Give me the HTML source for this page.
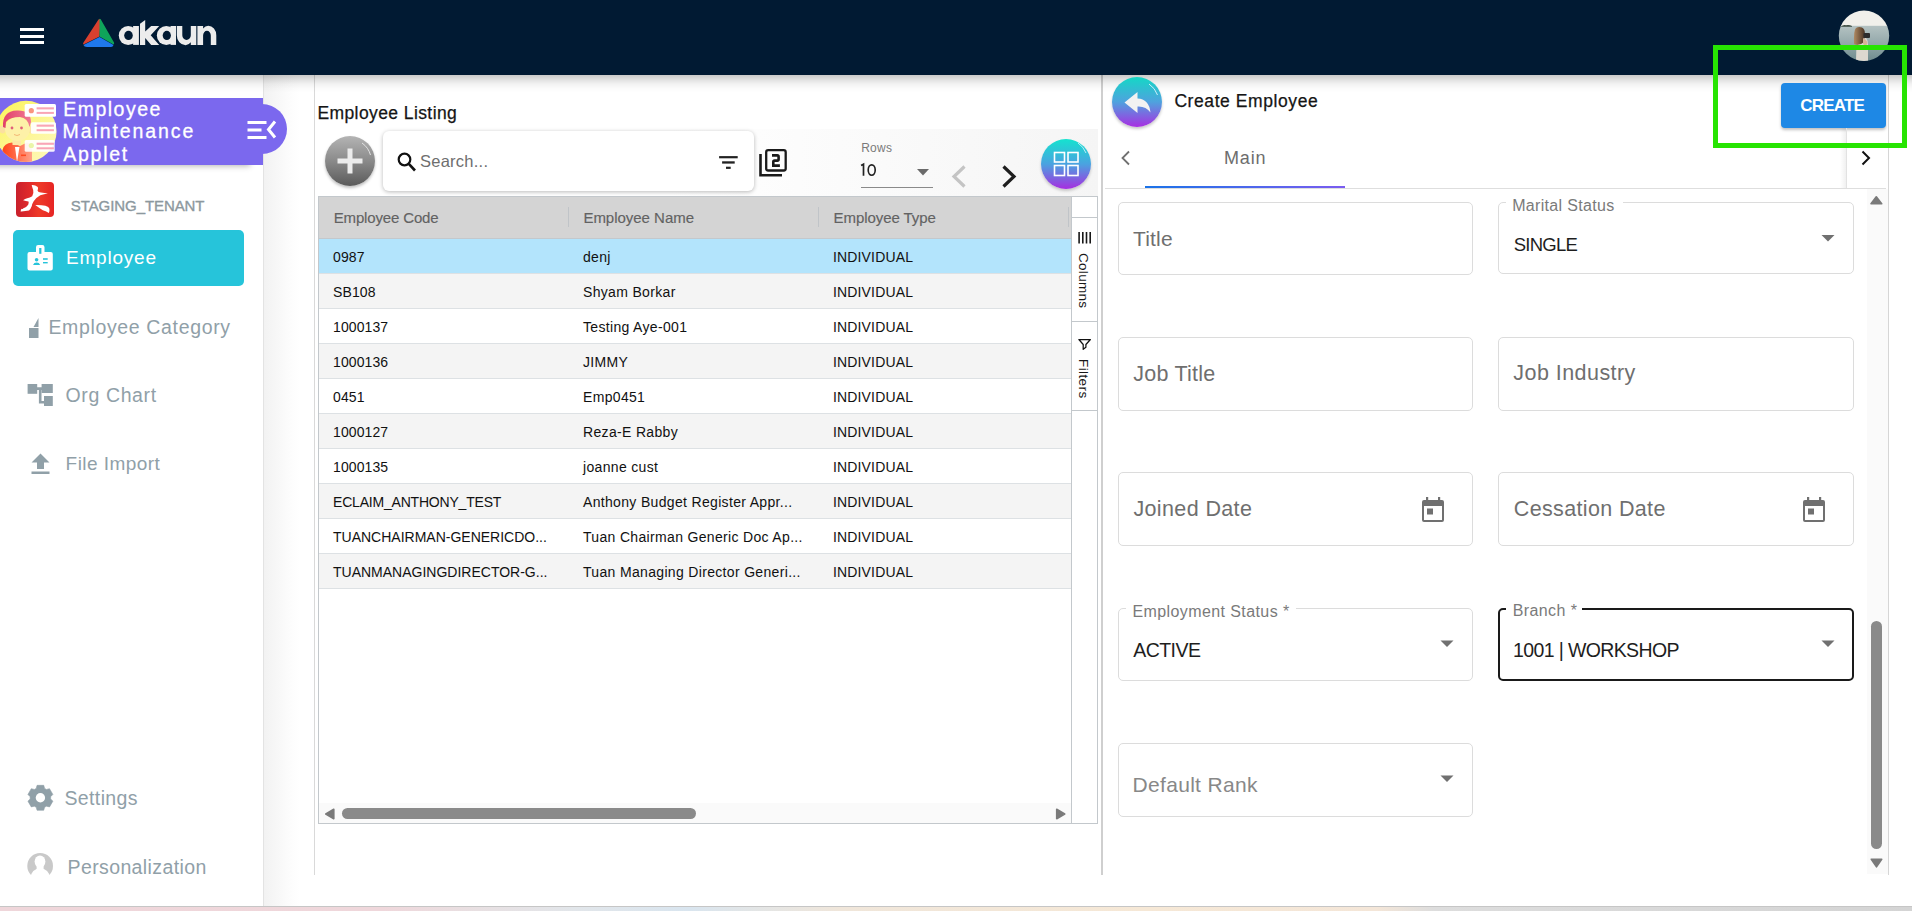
<!DOCTYPE html><html><head><meta charset="utf-8"><title>akaun</title><style>
*{margin:0;padding:0;box-sizing:border-box}
html,body{width:1912px;height:911px;overflow:hidden;background:#fff;font-family:"Liberation Sans",sans-serif}
.a{position:absolute}
.t{position:absolute;white-space:nowrap;font-family:"Liberation Sans",sans-serif}
svg{position:absolute;overflow:visible}
.trow{font-size:14px;line-height:15px;color:#111;letter-spacing:0.1px}.c2{letter-spacing:0.33px}.c3{letter-spacing:0.15px}.cup{letter-spacing:0px}.cecl{letter-spacing:-0.2px}</style></head><body>
<div class="a" style="left:0;top:906px;width:1912px;height:5px;background:linear-gradient(90deg,#efd6da 0%,#efd7db 20%,#e8e0e2 25%,#e2e6ea 30%,#d9e5ef 36%,#f0e6da 44%,#f6e8d6 60%,#f4e6d8 72%,#dddddd 75%,#d4d4d4 100%);border-top:1px solid #c6c6c6"></div>
<div class="a" style="left:0;top:75px;width:264px;height:831px;background:#fff;border-right:1px solid #e3e3e3"></div>
<div class="a" style="left:264px;top:75px;width:50px;height:831px;background:linear-gradient(90deg,#f2f2f2 0%,#f7f7f7 25%,#fcfcfc 50%,#fff 72%)"></div>
<div class="a" style="left:314px;top:75px;width:1px;height:800px;background:#d9d9d9"></div>
<div class="a" style="left:1101px;top:75px;width:2px;height:800px;background:#cfcfcf"></div>
<div class="a" style="left:1888px;top:75px;width:1px;height:800px;background:#d6d6d6"></div>
<div class="a" style="left:0;top:75px;width:1912px;height:18px;background:linear-gradient(180deg,rgba(0,0,0,.21) 0%,rgba(0,0,0,.12) 25%,rgba(0,0,0,.05) 50%,rgba(0,0,0,.015) 75%,rgba(0,0,0,0) 100%)"></div>
<div class="a" style="left:0;top:0;width:1912px;height:75px;background:#011a33"></div>
<div class="a" style="left:20px;top:28px;width:24px;height:3px;background:#fff"></div>
<div class="a" style="left:20px;top:34.5px;width:24px;height:3px;background:#fff"></div>
<div class="a" style="left:20px;top:41px;width:24px;height:3px;background:#fff"></div>
<svg style="left:0;top:0" width="1912" height="75">
<path d="M98.5 19.5 Q99.5 18.5 100.5 19.5 L99.5 36.5 L83.5 44.5 Q82.5 44 83.5 42.5 Z" fill="#d9402f"/>
<path d="M99.5 18.8 Q100.5 18.8 101 19.8 L114 42.5 Q114.5 44 113.5 44.5 L99.5 36.5 Z" fill="#0fa35a"/>
<path d="M83.5 45 L99.5 37 L113.5 45 Q113 47 111 47 L87 47 Q84 47 83.5 45 Z" fill="#1f78ec"/>
</svg>
<svg style="left:0;top:0" width="300" height="75">
<g fill="#ececec">
<circle cx="128.2" cy="35.45" r="9.45"/><rect x="133.1" y="26" width="5.8" height="18.9"/>
<path d="M140 23.8 L145.2 19.9 V31.5 L151.2 26 H159.2 L150.7 35.3 L159.2 44.9 H151.2 L145.2 38 V44.9 H140 Z"/>
<circle cx="166.3" cy="35.45" r="9.45"/><rect x="170.5" y="26" width="5.5" height="18.9"/>
<path d="M176.8 26 H182.3 V35.2 A4.25 4.8 0 0 0 190.8 35.2 V26 H196.3 V44.9 H190.8 V42.3 Q188.6 45.2 185.6 45.2 A8.8 9.9 0 0 1 176.8 35.2 Z"/>
<path d="M197.4 44.9 V26 H203.1 V28.6 Q205.2 25.7 208.2 25.7 A8.1 9.6 0 0 1 216.3 35.4 V44.9 H210.8 V35.4 A3.85 4.6 0 0 0 203.1 35.4 V44.9 Z"/>
</g>
<g fill="#011a33">
<ellipse cx="128.5" cy="35.45" rx="4.3" ry="4.6"/>
<ellipse cx="166.8" cy="35.45" rx="4.1" ry="4.6"/>
</g>
</svg>
<svg style="left:0;top:0" width="1912" height="75">
<defs><clipPath id="avp"><circle cx="1864" cy="35.8" r="25.2"/></clipPath>
<linearGradient id="sea" x1="0" y1="0" x2="0" y2="1"><stop offset="0" stop-color="#b4c2c2"/><stop offset=".5" stop-color="#93a8aa"/><stop offset="1" stop-color="#6d8a8c"/></linearGradient>
<linearGradient id="hairg" x1="0" y1="0" x2="1" y2="0"><stop offset="0" stop-color="#b08a62"/><stop offset="1" stop-color="#4a3424"/></linearGradient></defs>
<g clip-path="url(#avp)">
<rect x="1838" y="10" width="52" height="16" fill="#f1f0eb"/>
<rect x="1838" y="25.8" width="52" height="36" fill="url(#sea)"/>
<path d="M1841 26.6 Q1843 24.6 1846 25.2 Q1849 24.4 1852 26 L1852 26.8 L1841 26.8 Z" fill="#3a4a40"/>
<path d="M1856 62 L1856.5 42 Q1857 38 1860 38 L1866 38 Q1868 40 1868 45 L1868 62 Z" fill="#ddd8cf"/>
<path d="M1854 44 Q1853.5 30 1856 28 Q1858.5 26.5 1862 27.5 Q1865 29 1864.8 33 L1864 42 Q1861 45 1857 45 Z" fill="url(#hairg)"/>
<rect x="1863.5" y="33" width="6.5" height="5" rx="1" fill="#2c2c2c"/>
<path d="M1863 38 Q1866 39 1867.5 43 L1866 46 L1863 44 Z" fill="#d8b598"/>
</g>
</svg>
<div class="a" style="left:0;top:98px;width:263px;height:67px;background:#7b68ee;box-shadow:-10px 4px 6px -3px rgba(0,0,0,.3)"></div>
<div class="a" style="left:237px;top:104px;width:50px;height:50px;border-radius:50%;background:#7b68ee"></div>
<div class="a" style="left:200px;top:98px;width:63px;height:67px;background:#7b68ee"></div>
<svg style="left:0;top:0" width="300" height="200">
<defs><clipPath id="avc"><circle cx="26" cy="131.4" r="30.6"/></clipPath>
<linearGradient id="avg" x1="0" y1="0" x2="1" y2="1"><stop offset="0" stop-color="#fbf34a"/><stop offset=".6" stop-color="#fdf7a0"/><stop offset="1" stop-color="#fff9c8"/></linearGradient>
<linearGradient id="shirt" x1="0" y1="0" x2="1" y2="0"><stop offset="0" stop-color="#ff3d12"/><stop offset="1" stop-color="#ffa088"/></linearGradient>
<linearGradient id="hair" x1="0" y1="0" x2="1" y2="0"><stop offset="0" stop-color="#e2406a"/><stop offset="1" stop-color="#f07a92"/></linearGradient>
</defs>
<g clip-path="url(#avc)">
<rect x="-10" y="95" width="80" height="70" fill="url(#avg)"/>
<path d="M1 165 L2.5 150 Q4 143 12 142.5 L20 146 L27 142.5 Q32 144 32 150 L32 165 Z" fill="url(#shirt)"/>
<path d="M15 147 L17 162 L19.5 147 Z" fill="#fff"/>
<rect x="12.5" y="136" width="8.5" height="9" fill="#fde7a8"/>
<ellipse cx="2.5" cy="129.5" rx="3" ry="4" fill="#fbe0a0"/>
<ellipse cx="31.5" cy="129.5" rx="3" ry="4" fill="#fbe0a0"/>
<ellipse cx="17.5" cy="129" rx="12.5" ry="12" fill="#fdf1a8"/>
<path d="M3 127 Q2 111 17 110.5 Q31 110 31 122 L29.5 127 Q28 118 20 117 Q10 117 6 122 L5.5 128 Z" fill="url(#hair)"/>
<circle cx="12" cy="128" r="1.4" fill="#e0607a"/><circle cx="21.5" cy="128" r="1.4" fill="#e0607a"/>
<path d="M14 134.5 Q17 136.5 20 134.5" stroke="#f0b070" stroke-width=".9" fill="none"/>
<rect x="21" y="154.5" width="5" height="1.6" fill="#ff4a20"/>
</g>
<rect x="24.7" y="104" width="31.3" height="12.8" rx="1.5" fill="#fff"/>
<circle cx="31.3" cy="110.7" r="2.6" fill="#f9957e"/><rect x="36.6" y="107.3" width="17.3" height="2.1" fill="#f9a5b5"/><rect x="36.6" y="111.9" width="17.3" height="2" fill="#f9a5b5"/>
<rect x="30.9" y="122.2" width="25" height="11.5" rx="1.5" fill="#fff" opacity=".92"/>
<rect x="36.6" y="124.6" width="17.3" height="2.1" fill="#f9a5b5"/><rect x="36.6" y="129.2" width="17.3" height="2" fill="#f9a5b5"/>
<rect x="24.7" y="139.9" width="30" height="11.9" rx="1.5" fill="#fff" opacity=".9"/>
<circle cx="31.3" cy="145.5" r="2.6" fill="#eaf5a8"/><rect x="36.6" y="142.7" width="17.3" height="2.1" fill="#f9a5b5"/><rect x="36.6" y="147.3" width="17.3" height="2" fill="#f9a5b5"/>
<!-- menu collapse icon -->
<rect x="247.5" y="121" width="19" height="3" fill="#fff"/>
<rect x="247.5" y="128.5" width="14" height="3" fill="#fff"/>
<rect x="247.5" y="136" width="19" height="3" fill="#fff"/>
<path d="M275 121.5 L268.5 129.5 L275 137.5" stroke="#fff" stroke-width="3" fill="none"/>
</svg>
<div class="t " style="left:63.3px;top:100.2px;font-size:19.5px;line-height:19.5px;color:#fff;letter-spacing:1.47px;-webkit-text-stroke:0.3px #fff;">Employee</div>
<div class="t " style="left:62.6px;top:122.2px;font-size:19.5px;line-height:19.5px;color:#fff;letter-spacing:1.91px;-webkit-text-stroke:0.3px #fff;">Maintenance</div>
<div class="t " style="left:63.3px;top:144.9px;font-size:19.5px;line-height:19.5px;color:#fff;letter-spacing:1.72px;-webkit-text-stroke:0.3px #fff;">Applet</div>
<div class="a" style="left:16px;top:182px;width:38px;height:35px;border-radius:4px;background:linear-gradient(90deg,#c8202c,#e02a2a 35%,#ee3a28 60%,#e62424)"></div>
<svg style="left:0;top:0" width="100" height="240">
<path d="M31.7 185.1 Q35 184.8 37.8 187.1 Q38.5 189 37.5 190.6 Q38 192.5 41 192.5 L47.9 193.4 Q44 194.2 40.3 195.2 Q36 197.5 33.7 201.3 Q32 204 31.7 206.3 Q30.5 209.5 29 210.6 Q25 211.5 20.6 211.4 Q20.8 209.5 21.6 208.8 Q22.5 209.5 23 208.6 Q26 208 28.2 204.8 Q29 202.5 28.5 201.5 Q26 201.3 23.1 200.2 Q25 198.8 27.2 198.2 Q30 197.5 32.2 196.2 Q34 194 33.2 190.1 Q32 187 31.7 185.1 Z" fill="#fff"/>
<path d="M35.3 205 Q41 204.8 45.4 205.8 Q49 207 49.4 208.8 Q49.8 211 48.9 212.9 Q45.5 211 42.8 210.3 Q38.5 207.5 35.3 205 Z" fill="#fff"/>
</svg>
<div class="t " style="left:70.8px;top:197.6px;font-size:15.0px;line-height:15.0px;color:#8c989e;letter-spacing:-0.08px;-webkit-text-stroke:0.35px #8c989e;">STAGING_TENANT</div>
<div class="a" style="left:13px;top:230px;width:231px;height:56px;border-radius:5px;background:#26c4da"></div>
<svg style="left:0;top:0" width="100" height="300">
<path d="M29.5 252 Q27.5 252 27.5 254 L27.5 268.4 Q27.5 270.4 29.5 270.4 L50.8 270.4 Q52.8 270.4 52.8 268.4 L52.8 254 Q52.8 252 50.8 252 L44.5 252 L44.5 247.2 Q44.5 245.1 42.4 245.1 L38.1 245.1 Q36 245.1 36 247.2 L36 252 Z" fill="#fff"/>
<rect x="39.2" y="248" width="2.2" height="5.8" fill="#26c4da"/>
<circle cx="36.6" cy="259.8" r="1.8" fill="#26c4da"/>
<path d="M33 264.9 Q34 262.6 36.6 262.6 Q39.2 262.6 40.2 264.9 Z" fill="#26c4da"/>
<rect x="43" y="258.2" width="4.7" height="1.6" fill="#26c4da"/>
<rect x="43" y="262" width="4.7" height="1.4" fill="#26c4da"/>
</svg>
<div class="t " style="left:66.0px;top:247.8px;font-size:19.0px;line-height:19.0px;color:#fff;letter-spacing:0.79px;">Employee</div>
<svg style="left:0;top:0" width="100" height="900">
<rect x="29" y="328" width="9.5" height="10" fill="#90a0a8"/>
<path d="M33.5 327 L38.5 318 L38.5 327 Z" fill="#90a0a8"/>
<!-- org chart -->
<rect x="27.6" y="384" width="9.6" height="9.8" fill="#90a0a8"/>
<rect x="41.6" y="384" width="11.2" height="9" fill="#90a0a8"/>
<rect x="44" y="396" width="8.8" height="10" fill="#90a0a8"/>
<path d="M37 388.6 L42 388.6 M40.2 388 L40.2 402.3 L44.5 402.3" stroke="#90a0a8" stroke-width="2.6" fill="none"/>
<!-- upload -->
<path d="M40.5 453.5 L49.5 462.5 L44 462.5 L44 469 L37 469 L37 462.5 L31.5 462.5 Z" fill="#90a0a8"/>
<rect x="31.5" y="471.5" width="18" height="2.5" fill="#90a0a8"/>
</svg>
<div class="t " style="left:48.4px;top:317.8px;font-size:19.5px;line-height:19.5px;color:#90a0a8;letter-spacing:0.65px;">Employee Category</div>
<div class="t " style="left:65.6px;top:386.0px;font-size:19.5px;line-height:19.5px;color:#90a0a8;letter-spacing:0.61px;">Org Chart</div>
<div class="t " style="left:65.6px;top:453.5px;font-size:19.0px;line-height:19.0px;color:#90a0a8;letter-spacing:0.45px;">File Import</div>
<svg style="left:0;top:0" width="100" height="900">
<path d="M35.25 788.88 L36.21 788.39 L37.06 785.34 L43.74 785.34 L44.59 788.39 L45.55 788.88 L46.45 789.47 L49.52 788.68 L52.86 794.46 L50.64 796.72 L50.70 797.80 L50.64 798.88 L52.86 801.14 L49.52 806.92 L46.45 806.13 L45.55 806.72 L44.59 807.21 L43.74 810.26 L37.06 810.26 L36.21 807.21 L35.25 806.72 L34.35 806.13 L31.28 806.92 L27.94 801.14 L30.16 798.88 L30.10 797.80 L30.16 796.72 L27.94 794.46 L31.28 788.68 L34.35 789.47 Z" fill="#90a0a8" stroke="#90a0a8" stroke-width=".6" stroke-linejoin="round"/>
<circle cx="40.4" cy="797.8" r="4.7" fill="#fff"/>
<!-- person -->
<circle cx="40.15" cy="865.95" r="12.85" fill="#c9c9c9"/>
<ellipse cx="40" cy="861.6" rx="5.4" ry="6.2" fill="#fff"/>
<rect x="36.6" y="862" width="7" height="8" fill="#fff"/>
<circle cx="40.2" cy="877.9" r="9.7" fill="#fff"/>
<rect x="20" y="875.2" width="40" height="6" fill="#fff"/>
</svg>
<div class="t " style="left:64.4px;top:789.2px;font-size:19.5px;line-height:19.5px;color:#90a0a8;letter-spacing:0.39px;">Settings</div>
<div class="t " style="left:67.5px;top:858.1px;font-size:19.5px;line-height:19.5px;color:#90a0a8;letter-spacing:0.39px;">Personalization</div>
<div class="t " style="left:317.4px;top:105.4px;font-size:17.5px;line-height:17.5px;color:#151515;letter-spacing:0.41px;-webkit-text-stroke:0.25px #151515;">Employee Listing</div>
<div class="a" style="left:318px;top:129px;width:780px;height:68px;background:linear-gradient(90deg,#fff 0%,#fff 45%,#f5f5f5 100%)"></div>
<div class="a" style="left:325px;top:136px;width:50px;height:50px;border-radius:50%;background:linear-gradient(180deg,#b4b4b4 0%,#8a8a8a 50%,#5a5a5a 100%);box-shadow:0 2px 3px rgba(0,0,0,.25)"></div>
<svg style="left:0;top:0" width="400" height="200">
<rect x="347.5" y="148.5" width="5" height="25" fill="#ececec"/>
<rect x="337.5" y="158.5" width="25" height="5" fill="#ececec"/>
<path d="M362 143 A22 22 0 0 1 370.5 155" stroke="#e8e8e8" stroke-width="1" fill="none" opacity=".9"/>
</svg>
<div class="a" style="left:383px;top:131px;width:371px;height:60px;border-radius:6px;background:#fff;box-shadow:0 1px 4px rgba(0,0,0,.28)"></div>
<svg style="left:0;top:0" width="800" height="200">
<circle cx="404.5" cy="159.5" r="5.8" stroke="#111" stroke-width="2.2" fill="none"/>
<path d="M408.8 163.8 L415 170.5" stroke="#111" stroke-width="2.6"/>
<!-- filter lines -->
<rect x="719.1" y="156.1" width="18.6" height="2.2" fill="#222"/>
<rect x="722.1" y="161.3" width="12.6" height="2.3" fill="#222"/>
<rect x="726" y="166.7" width="4.7" height="2.2" fill="#222"/>
<!-- filter_2 -->
<path d="M760.5 154.1 L760.5 175.3 L782 175.3" stroke="#1a1a1a" stroke-width="2.6" fill="none"/>
<rect x="766.2" y="150.2" width="19.5" height="20.3" rx="2" stroke="#1a1a1a" stroke-width="2.3" fill="none"/>
<path d="M772 155.4 H777.3 Q778.6 155.4 778.6 156.7 V159.3 Q778.6 160.6 777.3 160.6 H774.6 Q773.3 160.6 773.3 161.9 V165.6 H779.9" stroke="#1a1a1a" stroke-width="2.6" fill="none"/>
</svg>
<div class="t " style="left:420.0px;top:152.7px;font-size:16.5px;line-height:16.5px;color:#6e6e6e;letter-spacing:0.25px;">Search...</div>
<div class="t " style="left:861.2px;top:142.2px;font-size:12.0px;line-height:12.0px;color:#7a7a7a;letter-spacing:0.27px;">Rows</div>
<svg style="left:0;top:0" width="900" height="200"><path d="M861.1 165.6 L863.5 164.2 V175.8" stroke="#222" stroke-width="1.7" fill="none"/><ellipse cx="871.7" cy="170" rx="3.5" ry="5.2" stroke="#222" stroke-width="1.65" fill="none"/></svg>
<div class="a" style="left:861px;top:187px;width:72px;height:1px;background:#8a8a8a"></div>
<svg style="left:0;top:0" width="1100" height="200">
<path d="M917 169 L929 169 L923 175.5 Z" fill="#6a6a6a"/>
<path d="M964.5 166.5 L954 176.5 L964.5 186.5" stroke="#c4c4c4" stroke-width="3.2" fill="none"/>
<path d="M1003.5 166.5 L1014 176.5 L1003.5 186.5" stroke="#1e1e1e" stroke-width="3.2" fill="none"/>
</svg>
<div class="a" style="left:1041px;top:139px;width:50px;height:50px;border-radius:50%;background:linear-gradient(180deg,#14e3cf 0%,#4aa3e0 50%,#a62ee0 100%);box-shadow:0 2px 3px rgba(0,0,0,.2)"></div>
<svg style="left:0;top:0" width="1100" height="200">
<rect x="1054.5" y="152.5" width="10" height="9.5" stroke="#fff" stroke-width="1.6" fill="none"/>
<rect x="1068" y="152.5" width="10" height="9.5" stroke="#fff" stroke-width="1.6" fill="none"/>
<rect x="1054.5" y="165.5" width="10" height="10" stroke="#fff" stroke-width="1.6" fill="none"/>
<rect x="1068" y="165.5" width="10" height="10" stroke="#fff" stroke-width="1.6" fill="none"/>
<path d="M1078 143 A22 22 0 0 1 1086 153" stroke="#e0f6ff" stroke-width="1" fill="none" opacity=".8"/>
</svg>
<div class="a" style="left:318px;top:196px;width:780px;height:628px;border:1px solid #c3c8cc;background:#fff"></div>
<div class="a" style="left:319px;top:197px;width:752px;height:42px;background:#d4d4d4;border-bottom:1px solid #c3c8cc"></div>
<div class="a" style="left:568px;top:207px;width:1px;height:20px;background:#c0c4c8"></div>
<div class="a" style="left:818px;top:207px;width:1px;height:20px;background:#c0c4c8"></div>
<div class="a" style="left:1068px;top:207px;width:1px;height:20px;background:#c0c4c8"></div>
<div class="t " style="left:333.7px;top:209.7px;font-size:15.0px;line-height:15.0px;color:#626262;letter-spacing:-0.15px;-webkit-text-stroke:0.15px #626262;">Employee Code</div>
<div class="t " style="left:583.4px;top:209.7px;font-size:15.0px;line-height:15.0px;color:#626262;letter-spacing:-0.02px;-webkit-text-stroke:0.15px #626262;">Employee Name</div>
<div class="t " style="left:833.6px;top:209.5px;font-size:15.0px;line-height:15.0px;color:#626262;letter-spacing:-0.07px;-webkit-text-stroke:0.15px #626262;">Employee Type</div>
<div class="a" style="left:319px;top:239px;width:752px;height:35px;background:#b3e4fc;border-bottom:1px solid #dde1e4"></div>
<div class="t trow c1" style="left:333px;top:250px">0987</div>
<div class="t trow c2" style="left:583px;top:250px">denj</div>
<div class="t trow c3" style="left:833px;top:250px">INDIVIDUAL</div>
<div class="a" style="left:319px;top:274px;width:752px;height:35px;background:#f4f4f4;border-bottom:1px solid #dde1e4"></div>
<div class="t trow c1" style="left:333px;top:285px">SB108</div>
<div class="t trow c2" style="left:583px;top:285px">Shyam Borkar</div>
<div class="t trow c3" style="left:833px;top:285px">INDIVIDUAL</div>
<div class="a" style="left:319px;top:309px;width:752px;height:35px;background:#fff;border-bottom:1px solid #dde1e4"></div>
<div class="t trow c1" style="left:333px;top:320px">1000137</div>
<div class="t trow c2" style="left:583px;top:320px">Testing Aye-001</div>
<div class="t trow c3" style="left:833px;top:320px">INDIVIDUAL</div>
<div class="a" style="left:319px;top:344px;width:752px;height:35px;background:#f4f4f4;border-bottom:1px solid #dde1e4"></div>
<div class="t trow c1" style="left:333px;top:355px">1000136</div>
<div class="t trow c2" style="left:583px;top:355px">JIMMY</div>
<div class="t trow c3" style="left:833px;top:355px">INDIVIDUAL</div>
<div class="a" style="left:319px;top:379px;width:752px;height:35px;background:#fff;border-bottom:1px solid #dde1e4"></div>
<div class="t trow c1" style="left:333px;top:390px">0451</div>
<div class="t trow c2" style="left:583px;top:390px">Emp0451</div>
<div class="t trow c3" style="left:833px;top:390px">INDIVIDUAL</div>
<div class="a" style="left:319px;top:414px;width:752px;height:35px;background:#f4f4f4;border-bottom:1px solid #dde1e4"></div>
<div class="t trow c1" style="left:333px;top:425px">1000127</div>
<div class="t trow c2" style="left:583px;top:425px">Reza-E Rabby</div>
<div class="t trow c3" style="left:833px;top:425px">INDIVIDUAL</div>
<div class="a" style="left:319px;top:449px;width:752px;height:35px;background:#fff;border-bottom:1px solid #dde1e4"></div>
<div class="t trow c1" style="left:333px;top:460px">1000135</div>
<div class="t trow c2" style="left:583px;top:460px">joanne cust</div>
<div class="t trow c3" style="left:833px;top:460px">INDIVIDUAL</div>
<div class="a" style="left:319px;top:484px;width:752px;height:35px;background:#f4f4f4;border-bottom:1px solid #dde1e4"></div>
<div class="t trow c1 cecl" style="left:333px;top:495px">ECLAIM_ANTHONY_TEST</div>
<div class="t trow c2" style="left:583px;top:495px">Anthony Budget Register Appr...</div>
<div class="t trow c3" style="left:833px;top:495px">INDIVIDUAL</div>
<div class="a" style="left:319px;top:519px;width:752px;height:35px;background:#fff;border-bottom:1px solid #dde1e4"></div>
<div class="t trow c1 cup" style="left:333px;top:530px">TUANCHAIRMAN-GENERICDO...</div>
<div class="t trow c2" style="left:583px;top:530px">Tuan Chairman Generic Doc Ap...</div>
<div class="t trow c3" style="left:833px;top:530px">INDIVIDUAL</div>
<div class="a" style="left:319px;top:554px;width:752px;height:35px;background:#f4f4f4;border-bottom:1px solid #dde1e4"></div>
<div class="t trow c1 cup" style="left:333px;top:565px">TUANMANAGINGDIRECTOR-G...</div>
<div class="t trow c2" style="left:583px;top:565px">Tuan Managing Director Generi...</div>
<div class="t trow c3" style="left:833px;top:565px">INDIVIDUAL</div>
<div class="a" style="left:1071px;top:197px;width:1px;height:626px;background:#c3c8cc"></div>
<div class="a" style="left:1072px;top:217px;width:25px;height:1px;background:#c3c8cc"></div>
<div class="a" style="left:1072px;top:321px;width:25px;height:1px;background:#c3c8cc"></div>
<div class="a" style="left:1072px;top:410px;width:25px;height:1px;background:#c3c8cc"></div>
<svg style="left:0;top:0" width="1100" height="420">
<rect x="1078.3" y="232" width="1.6" height="11.5" fill="#181818"/>
<rect x="1082" y="232" width="1.6" height="11.5" fill="#181818"/>
<rect x="1085.7" y="232" width="1.6" height="11.5" fill="#181818"/>
<rect x="1089.4" y="232" width="1.6" height="11.5" fill="#181818"/>
<path d="M1078.9 339.5 H1090.4 L1085.9 344.5 V347.2 L1083.2 349.3 V344.5 Z" stroke="#111" stroke-width="1.25" fill="none" stroke-linejoin="round"/>
</svg>
<div class="t" style="left:1090px;top:252.5px;font-size:13.5px;line-height:14px;color:#181818;transform-origin:0 0;transform:rotate(90deg);letter-spacing:0.3px">Columns</div>
<div class="t" style="left:1090px;top:358.5px;font-size:13.5px;line-height:14px;color:#181818;transform-origin:0 0;transform:rotate(90deg);letter-spacing:0.4px">Filters</div>
<div class="a" style="left:319px;top:803px;width:752px;height:20px;background:#fafafa"></div>
<div class="a" style="left:342px;top:808px;width:354px;height:11px;border-radius:6px;background:#8a8a8a"></div>
<svg style="left:0;top:0" width="1100" height="900">
<path d="M333.8 809.3 L325.8 814 L333.8 818.7 Z" fill="#7a7a7a" stroke="#7a7a7a" stroke-width="1.6" stroke-linejoin="round"/>
<path d="M1056.7 809.3 L1064.7 814 L1056.7 818.7 Z" fill="#7a7a7a" stroke="#7a7a7a" stroke-width="1.6" stroke-linejoin="round"/>
</svg>
<div class="a" style="left:1112px;top:77px;width:50px;height:50px;border-radius:50%;background:linear-gradient(180deg,#14d8c6 0%,#4fa2de 50%,#a82fe2 100%);box-shadow:0 2px 3px rgba(0,0,0,.22)"></div>
<svg style="left:0;top:0" width="1200" height="200">
<path d="M1137.5 92 L1124.5 102.5 L1137.5 113 L1137.5 106.5 Q1146 106 1150.5 112.5 Q1149 99 1137.5 98.5 Z" fill="#f2f2f2"/>
<path d="M1149 84 A22 22 0 0 1 1157.5 95" stroke="#e8f8ff" stroke-width="1" fill="none" opacity=".85"/>
</svg>
<div class="t " style="left:1174.4px;top:93.4px;font-size:17.5px;line-height:17.5px;color:#151515;letter-spacing:0.58px;-webkit-text-stroke:0.25px #151515;">Create Employee</div>
<div class="a" style="left:1781px;top:83px;width:105px;height:45px;border-radius:4px;background:#1e88e5;box-shadow:0 2px 3px rgba(0,0,0,.25)"></div>
<div class="t " style="left:1800.3px;top:97.1px;font-size:17.0px;line-height:17.0px;color:#fff;letter-spacing:-0.82px;font-weight:bold;">CREATE</div>
<svg style="left:0;top:0" width="1912" height="200">
<path d="M1129 151.5 L1122.5 158 L1129 164.5" stroke="#707070" stroke-width="1.8" fill="none"/>
<path d="M1862.5 151.5 L1869 158 L1862.5 164.5" stroke="#111" stroke-width="2" fill="none"/>
</svg>
<div class="t " style="left:1223.9px;top:149.1px;font-size:18.0px;line-height:18.0px;color:#6d6d6d;letter-spacing:0.90px;">Main</div>
<div class="a" style="left:1105px;top:188px;width:781px;height:1px;background:#dedede"></div>
<div class="a" style="left:1145px;top:186px;width:200px;height:2px;background:linear-gradient(90deg,#1a73e8,#7b5cf0)"></div>
<div class="a" style="left:1840px;top:128px;width:6px;height:60px;background:linear-gradient(90deg,rgba(0,0,0,0),rgba(0,0,0,.06))"></div>
<div class="a" style="left:1846px;top:128px;width:1px;height:60px;background:#e2e2e2"></div>
<div class="a" style="left:1867px;top:189px;width:21px;height:685px;background:#fafafa"></div>
<div class="a" style="left:1871px;top:621px;width:11px;height:228px;border-radius:6px;background:#8a8a8a"></div>
<svg style="left:0;top:0" width="1912" height="900">
<path d="M1871 203.8 L1876.3 196.8 L1881.7 203.8 Z" fill="#7a7a7a" stroke="#7a7a7a" stroke-width="1.6" stroke-linejoin="round"/>
<path d="M1871.3 859.2 L1881.7 859.2 L1876.5 866.8 Z" fill="#7a7a7a" stroke="#7a7a7a" stroke-width="1.6" stroke-linejoin="round"/>
</svg>
<div class="a" style="left:1118px;top:202px;width:355px;height:73px;border:1px solid #dcdcdc;border-radius:5px"></div>
<div class="t " style="left:1132.9px;top:227.5px;font-size:21.0px;line-height:21.0px;color:#6f6f6f;letter-spacing:0.20px;">Title</div>
<div class="a" style="left:1498px;top:202px;width:356px;height:72px;border:1px solid #dcdcdc;border-radius:5px"></div>
<div class="a" style="left:1506px;top:200px;width:117px;height:4px;background:#fff"></div>
<div class="t " style="left:1512.2px;top:197.7px;font-size:16.0px;line-height:16.0px;color:#7a7a7a;letter-spacing:0.32px;">Marital Status</div>
<div class="t " style="left:1513.7px;top:235.7px;font-size:18.5px;line-height:18.5px;color:#1e1e1e;letter-spacing:-0.76px;">SINGLE</div>
<div class="a" style="left:1118px;top:337px;width:355px;height:74px;border:1px solid #dcdcdc;border-radius:5px"></div>
<div class="t " style="left:1133.2px;top:364.0px;font-size:21.5px;line-height:21.5px;color:#6f6f6f;letter-spacing:0.25px;">Job Title</div>
<div class="a" style="left:1498px;top:337px;width:356px;height:74px;border:1px solid #dcdcdc;border-radius:5px"></div>
<div class="t " style="left:1513.3px;top:363.1px;font-size:21.5px;line-height:21.5px;color:#6f6f6f;letter-spacing:0.45px;">Job Industry</div>
<div class="a" style="left:1118px;top:472px;width:355px;height:74px;border:1px solid #dcdcdc;border-radius:5px"></div>
<div class="t " style="left:1133.4px;top:499.3px;font-size:21.5px;line-height:21.5px;color:#6f6f6f;letter-spacing:0.38px;">Joined Date</div>
<div class="a" style="left:1498px;top:472px;width:356px;height:74px;border:1px solid #dcdcdc;border-radius:5px"></div>
<div class="t " style="left:1513.8px;top:499.3px;font-size:21.5px;line-height:21.5px;color:#6f6f6f;letter-spacing:0.35px;">Cessation Date</div>
<svg style="left:0;top:0" width="1912" height="900">
<path d="M1422 502 Q1422 500 1424 500 L1442 500 Q1444 500 1444 502 L1444 520 Q1444 522 1442 522 L1424 522 Q1422 522 1422 520 Z M1424 506 L1424 520 L1442 520 L1442 506 Z" fill="#707070" fill-rule="evenodd"/>
<rect x="1426" y="497" width="2.2" height="4" fill="#707070"/>
<rect x="1438" y="497" width="2.2" height="4" fill="#707070"/>
<rect x="1427" y="508.5" width="6" height="6" fill="#707070"/>
</svg>
<svg style="left:0;top:0" width="1912" height="900">
<path d="M1803 502 Q1803 500 1805 500 L1823 500 Q1825 500 1825 502 L1825 520 Q1825 522 1823 522 L1805 522 Q1803 522 1803 520 Z M1805 506 L1805 520 L1823 520 L1823 506 Z" fill="#707070" fill-rule="evenodd"/>
<rect x="1807" y="497" width="2.2" height="4" fill="#707070"/>
<rect x="1819" y="497" width="2.2" height="4" fill="#707070"/>
<rect x="1808" y="508.5" width="6" height="6" fill="#707070"/>
</svg>
<div class="a" style="left:1118px;top:608px;width:355px;height:73px;border:1px solid #dcdcdc;border-radius:5px"></div>
<div class="a" style="left:1126px;top:606px;width:170px;height:4px;background:#fff"></div>
<div class="t " style="left:1132.4px;top:603.5px;font-size:16.0px;line-height:16.0px;color:#7a7a7a;letter-spacing:0.41px;">Employment Status *</div>
<div class="t " style="left:1133.3px;top:641.1px;font-size:19.5px;line-height:19.5px;color:#1e1e1e;letter-spacing:-0.56px;">ACTIVE</div>
<div class="a" style="left:1498px;top:608px;width:356px;height:73px;border:2px solid #1a1a1a;border-radius:5px"></div>
<div class="a" style="left:1506px;top:606px;width:76px;height:4px;background:#fff"></div>
<div class="t " style="left:1512.7px;top:603.1px;font-size:16.0px;line-height:16.0px;color:#7a7a7a;letter-spacing:0.40px;">Branch *</div>
<div class="t " style="left:1513.1px;top:641.3px;font-size:19.5px;line-height:19.5px;color:#1e1e1e;letter-spacing:-0.63px;">1001 | WORKSHOP</div>
<div class="a" style="left:1118px;top:743px;width:355px;height:74px;border:1px solid #dcdcdc;border-radius:5px"></div>
<div class="t " style="left:1132.5px;top:774.2px;font-size:21.0px;line-height:21.0px;color:#888;letter-spacing:0.32px;">Default Rank</div>
<svg style="left:0;top:0" width="1912" height="900">
<path d="M1821.5 235 L1834.5 235 L1828 241.5 Z" fill="#707070"/>
<path d="M1440.5 640.5 L1453.5 640.5 L1447 647 Z" fill="#707070"/>
<path d="M1821.5 640.5 L1834.5 640.5 L1828 647 Z" fill="#707070"/>
<path d="M1440.5 775.5 L1453.5 775.5 L1447 782 Z" fill="#707070"/>
</svg>
<div class="a" style="left:1713px;top:44.5px;width:194px;height:103.5px;border:5px solid #27e402"></div>
</body></html>
